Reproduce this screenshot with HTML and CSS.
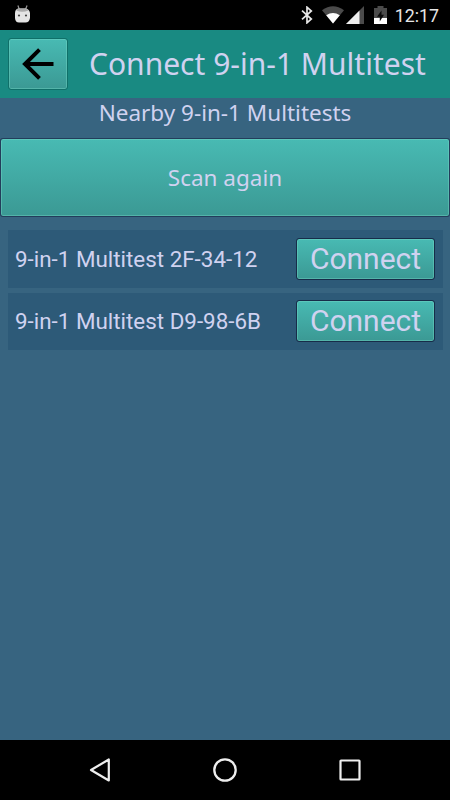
FILE: index.html
```html
<!DOCTYPE html>
<html lang="en">
  <head>
    <meta charset="UTF-8" />
    <meta name="viewport" content="width=device-width, initial-scale=1.0" />
    <title>Connect 9-in-1 Multitest</title>
    <link rel="stylesheet" href="styles.css">
  </head>
  <body>
    <!-- Status bar -->
    <div class="status-bar">
      <svg class="debug-icon" width="16" height="18" viewBox="0 0 16 18">
        <path d="M3.9 0.5L5.2 4M13.1 0.5L11.6 4" stroke="#999" stroke-width="1.2" />
        <path d="M1 8Q1.2 3.5 5 3.5H11Q15.2 3.5 16 8V13Q15.2 17.5 11.5 17.5H5Q1.4 17.5 1 13Z" fill="#e4e4e4" />
        <path d="M2.4 5.5Q3.2 3.5 5 3.5H11.5Q13.4 3.5 14.5 5.5Q8 8 2.4 5.5Z" fill="#aaa" />
        <circle cx="5" cy="10.5" r="1.1" fill="#444" />
        <circle cx="12" cy="10.5" r="1.1" fill="#444" />
      </svg>
      <div class="status-icons">
        <svg class="bluetooth" width="12" height="18" viewBox="0 0 12 18">
          <path d="M1 4.7L10.3 13L6 16.8V1.2L10.3 5L1 13.3" fill="none" stroke="#e8e8e8" stroke-width="1.7" />
        </svg>
        <svg class="wifi" width="22" height="18" viewBox="0 0 22 18">
          <path d="M0 4.2Q11-3.7 22 4.2L11 17.5Z" fill="#4b4b4b" />
          <path d="M4.2 9.3Q11 4.8 17.8 9.3L11 17.5Z" fill="#fff" />
        </svg>
        <svg class="signal" width="18" height="18" viewBox="0 0 18 18">
          <path d="M0 18L18 0V18Z" fill="#4b4b4b" />
          <path d="M0 18L13.5 4.5V18Z" fill="#eee" />
        </svg>
        <svg class="battery" width="13" height="18" viewBox="0 0 13 18">
          <path d="M0 2H3.5V0H9.5V2H13V18H0Z" fill="#4b4b4b" />
          <path d="M0 12H13V18H0Z" fill="#fff" />
          <path d="M7.5 4.5L3 10.8H5.8V15.5L10 8.8H7.5Z" fill="#0a0a0a" />
        </svg>
      </div>
      <span class="clock">12:17</span>
    </div>

    <header class="header">
      <button class="btn back" aria-label="Back">
        <svg width="34" height="34" viewBox="0 0 34 34">
          <path d="M32.5 17H4M18.5 2.7L4 17L18.5 31.3" fill="none" stroke="#000" stroke-width="4" />
        </svg>
      </button>
      <h1>Connect 9-in-1 Multitest</h1>
    </header>

    <main class="content">
      <h2>Nearby 9-in-1 Multitests</h2>
      <button class="btn scan">Scan again</button>
      <div class="devices">
        <div class="device">
          <span>9-in-1 Multitest 2F-34-12</span>
          <button class="btn connect">Connect</button>
        </div>
        <div class="device">
          <span>9-in-1 Multitest D9-98-6B</span>
          <button class="btn connect">Connect</button>
        </div>
      </div>
    </main>

    <!-- Navigation bar -->
    <nav class="nav-bar">
      <svg width="24" height="26" viewBox="0 0 24 26">
        <path d="M20.8 2.5V23.5L3 13Z" fill="none" stroke="#eee" stroke-width="2.2" stroke-linejoin="round" />
      </svg>
      <svg width="24" height="26" viewBox="0 0 24 26">
        <circle cx="12" cy="13" r="10.7" fill="none" stroke="#eee" stroke-width="2.3" />
      </svg>
      <svg width="24" height="26" viewBox="0 0 24 26">
        <rect x="2.5" y="3.5" width="19" height="19" rx="0.5" fill="none" stroke="#eee" stroke-width="2.2" />
      </svg>
    </nav>
  </body>
</html>
```
FILE: styles.css
```css
* {
  box-sizing: border-box;
}

body {
  margin: 0;
  height: 800px;
  display: flex;
  flex-direction: column;
  overflow: hidden;
  background: #376480;
  color: #d0d2f0;
  font-family: "Noto Sans", sans-serif;
}

svg {
  display: block;
}

.status-bar {
  height: 30px;
  padding: 0 11px 0 14px;
  display: flex;
  align-items: center;
  background: #000;
}

.debug-icon {
  margin-bottom: 3px;
}

.status-icons {
  display: flex;
  margin-left: auto;
}

.wifi {
  margin-left: 9px;
}

.signal {
  margin-left: 2px;
}

.battery {
  margin-left: 10px;
}

.clock {
  margin-left: 8px;
  padding-top: 1px;
  color: #e6e6e6;
  font: 400 17.8px/30px Roboto, sans-serif;
}

.header {
  height: 67.5px;
  padding: 8px;
  display: flex;
  background: #198a82;
}

h1,
h2 {
  margin: 0;
  font-weight: 400;
  white-space: nowrap;
}

h1 {
  margin-left: 21px;
  font-size: 30px;
  line-height: 52px;
}

h2 {
  height: 40.5px;
  font-size: 22.5px;
  line-height: 30px;
  text-align: center;
}

.btn {
  padding: 0;
  display: flex;
  align-items: center;
  justify-content: center;
  color: inherit;
  font-family: inherit;
  border: 1px solid rgba(20, 30, 60, 0.55);
  border-radius: 3px;
  background: linear-gradient(#48bab3, #3b9994) padding-box;
  box-shadow: inset 0 0 0 1px rgba(120, 220, 200, 0.4);
}

.back {
  width: 60px;
  height: 52px;
  border-color: #107069;
}

.content {
  flex: 1;
}

.scan {
  width: 450px;
  height: 79px;
  font-size: 22.5px;
}

.devices {
  padding: 13px 7.5px 0;
}

.device {
  height: 57.5px;
  margin-bottom: 5px;
  padding: 0 7.5px;
  display: flex;
  align-items: center;
  justify-content: space-between;
  background: #2d5a78;
  font-family: Roboto, sans-serif;
  font-size: 22.4px;
  white-space: nowrap;
}

.connect {
  width: 139px;
  height: 42px;
  padding-bottom: 1px;
  font-size: 30px;
  border-color: #172c49;
}

.nav-bar {
  height: 60px;
  padding: 0 88px;
  display: flex;
  align-items: center;
  justify-content: space-between;
  background: #000;
}
```
